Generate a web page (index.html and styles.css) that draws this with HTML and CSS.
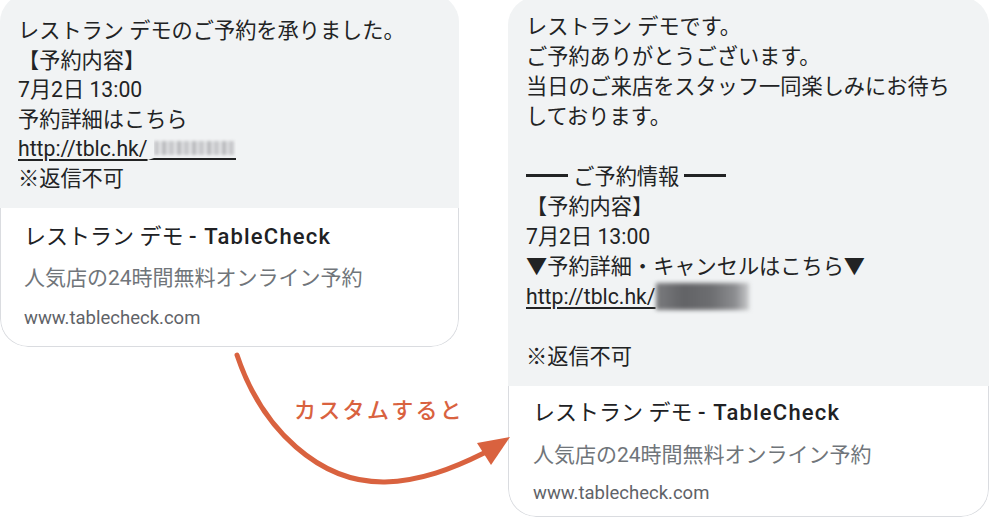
FILE: index.html
```html
<!DOCTYPE html>
<html lang="ja">
<head>
<meta charset="utf-8">
<link rel="stylesheet" href="styles.css">
</head>
<body>
<div class="stage">
  <div class="card card-left">
    <div class="bubble bubble-left">
      <p class="line">レストラン デモのご予約を承りました。</p>
      <p class="line">【予約内容】</p>
      <p class="line">7月2日 13:00</p>
      <p class="line">予約詳細はこちら</p>
      <p class="line"><span class="link">http://tblc.hk/</span><span class="blur-wrap"><span class="blur-light"></span></span></p>
      <p class="line">※返信不可</p>
    </div>
    <div class="preview preview-left">
      <p class="p-title">レストラン デモ <span class="brand">- TableCheck</span></p>
      <p class="p-sub">人気店の24時間無料オンライン予約</p>
      <p class="p-url">www.tablecheck.com</p>
    </div>
  </div>

  <div class="card card-right">
    <div class="bubble bubble-right">
      <p class="line">レストラン デモです。</p>
      <p class="line">ご予約ありがとうございます。</p>
      <p class="line">当日のご来店をスタッフ一同楽しみにお待ち</p>
      <p class="line">しております。</p>
      <p class="line">&nbsp;</p>
      <p class="line"><span class="rule"></span> ご予約情報 <span class="rule"></span></p>
      <p class="line">【予約内容】</p>
      <p class="line">7月2日 13:00</p>
      <p class="line">▼予約詳細・キャンセルはこちら▼</p>
      <p class="line"><span class="link">http://tblc.hk/</span><span class="blur-dark"></span></p>
      <p class="line">&nbsp;</p>
      <p class="line">※返信不可</p>
    </div>
    <div class="preview preview-right">
      <p class="p-title">レストラン デモ <span class="brand">- TableCheck</span></p>
      <p class="p-sub">人気店の24時間無料オンライン予約</p>
      <p class="p-url">www.tablecheck.com</p>
    </div>
  </div>

  <svg class="arrow" width="990" height="521" viewBox="0 0 990 521" aria-hidden="true">
    <path d="M237 355 C262 430 320 483 385 482 C420 481 452 469 484 453" fill="none" stroke="#d9623f" stroke-width="5" stroke-linecap="round"/>
    <polygon points="510,437 477,443 491,465" fill="#d9623f"/>
  </svg>
  <div class="custom-label">カスタムすると</div>
</div>
</body>
</html>
```

FILE: styles.css
```css
* { box-sizing: border-box; }
html, body {
  margin: 0;
  padding: 0;
  background: #ffffff;
  width: 990px;
  height: 521px;
  overflow: hidden;
}
body {
  font-family: "Roboto", "Noto Sans CJK JP", sans-serif;
  color: #222324;
}
p { margin: 0; }

.stage {
  position: relative;
  width: 990px;
  height: 521px;
  display: flex;
  align-items: flex-start;
  gap: 49px;
}

.card {
  border-radius: 28px;
  overflow: hidden;
  background: #ffffff;
}
.card-left {
  width: 459px;
  margin-top: -6px;
}
.card-right {
  width: 481px;
  margin-top: -3px;
}

.bubble {
  background: #f1f3f4;
  padding-left: 18px;
  font-size: 21.2px;
}
.bubble-left {
  padding-top: 22px;
  padding-bottom: 15px;
}
.bubble-left .line { line-height: 29.5px; }
.bubble-right {
  padding-top: 15px;
  padding-bottom: 14px;
}
.bubble-right .line { line-height: 30px; }

.line {
  white-space: nowrap;
}
.link {
  text-decoration: underline;
  text-decoration-thickness: 1.5px;
  text-underline-offset: 3px;
}
.rule {
  display: inline-block;
  width: 42px;
  height: 3px;
  background: #222324;
  vertical-align: 7px;
}

.blur-wrap {
  display: inline-block;
  vertical-align: -4px;
  width: 88px;
  height: 22px;
  border-bottom: 2px solid #222324;
  border-left: 6px solid #f1f3f4;
  position: relative;
  overflow: hidden;
}
.blur-light {
  display: block;
  margin: 3px 0 0 0;
  width: 80px;
  height: 14px;
  background: repeating-linear-gradient(90deg, #c7c8cb 0 5px, #e4e5e7 5px 8px, #b9babd 8px 12px, #dedfe1 12px 15px);
  filter: blur(1.6px);
}

.blur-dark {
  display: inline-block;
  vertical-align: -6px;
  width: 93px;
  height: 27px;
  background: linear-gradient(90deg, #7a7b7e 0%, #626366 30%, #6d6e71 60%, #8c8d90 85%, #c9cacc 100%);
  filter: blur(2px);
}

.preview {
  border: 1px solid #dadce0;
  border-top: 0;
  border-radius: 0 0 28px 28px;
  background: #ffffff;
}
.preview-left {
  padding: 14px 0 16px 23px;
}
.preview-right {
  padding: 12px 0 11px 24px;
}

.p-title {
  font-size: 22px;
  line-height: 30px;
  color: #202124;
  white-space: nowrap;
}
.brand {
  font-weight: 500;
  letter-spacing: 1.2px;
}
.p-sub {
  font-size: 21px;
  line-height: 30px;
  color: #70757a;
  white-space: nowrap;
}
.p-url {
  font-size: 18.5px;
  line-height: 24px;
  color: #5f6368;
}
.preview-left .p-sub { margin-top: 11px; }
.preview-left .p-url { margin-top: 13px; }
.preview-right .p-sub { margin-top: 12px; }
.preview-right .p-url { margin-top: 11px; }

.arrow {
  position: absolute;
  left: 0;
  top: 0;
  pointer-events: none;
}
.custom-label {
  position: absolute;
  left: 294px;
  top: 394px;
  font-family: "Noto Sans CJK JP", sans-serif;
  font-size: 22px;
  line-height: 28px;
  letter-spacing: 2.3px;
  font-weight: 500;
  color: #d9623f;
  white-space: nowrap;
}
```
